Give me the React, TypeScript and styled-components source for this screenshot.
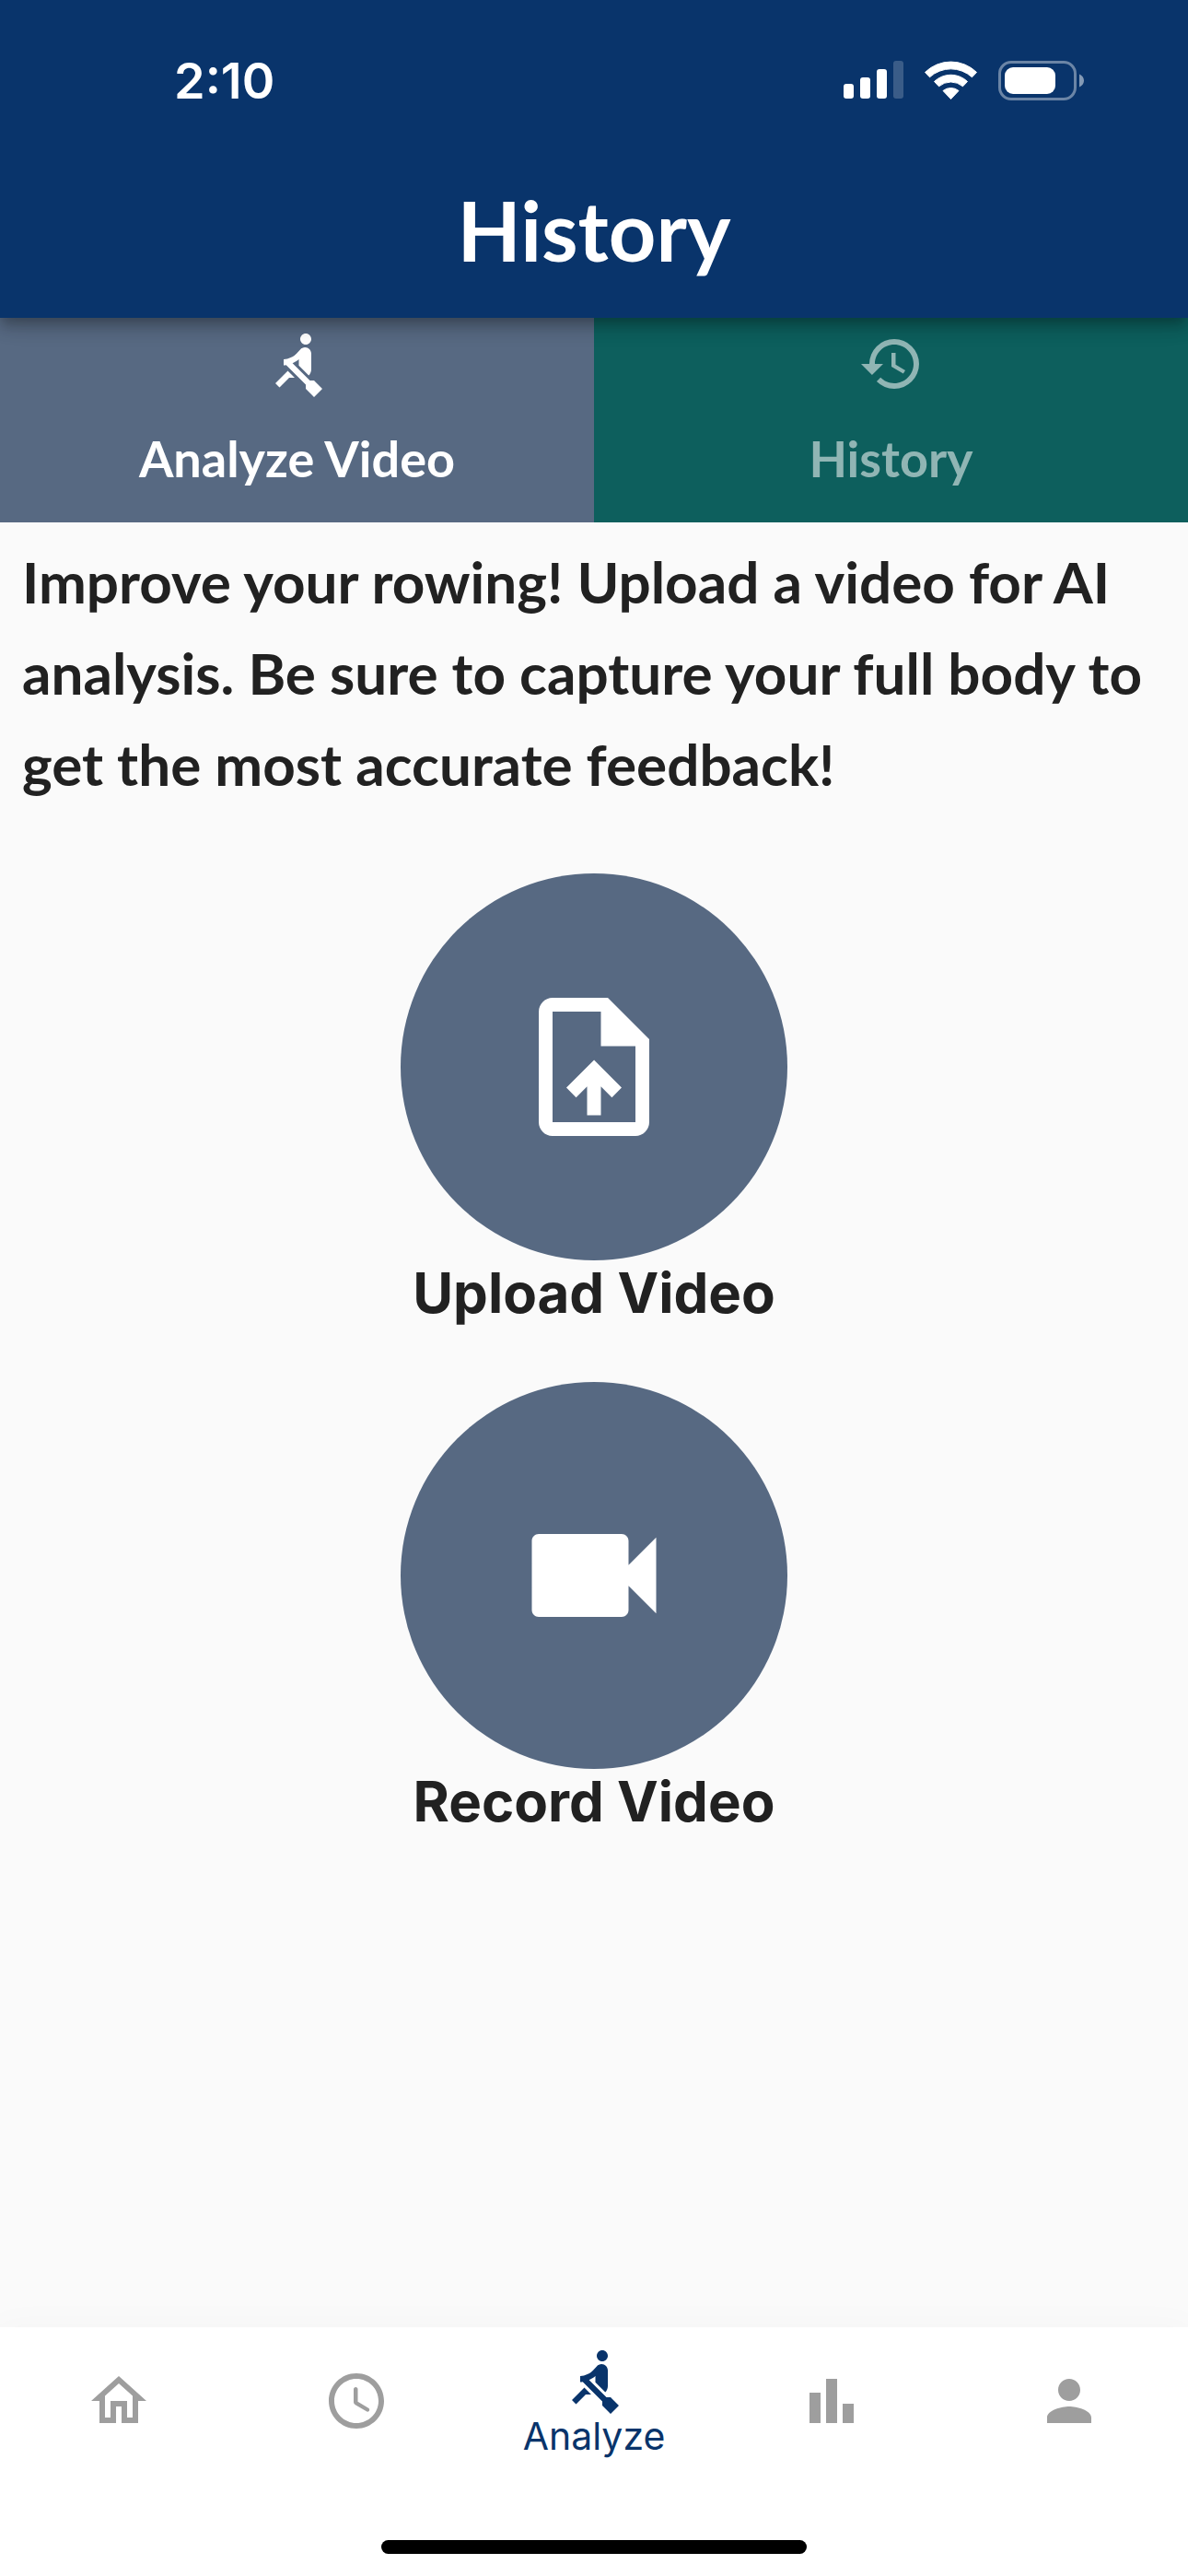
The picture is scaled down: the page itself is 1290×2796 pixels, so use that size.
import React, { useState } from "react";
import styled, { createGlobalStyle } from "styled-components";
import { MdRowing, MdHistory, MdVideocam, MdBarChart, MdPerson } from "react-icons/md";

const GlobalStyle = createGlobalStyle`
  * { box-sizing: border-box; }
  body { margin: 0; background: #fafafa; }
  button { margin: 0; padding: 0; border: 0; background: none; font: inherit; color: inherit; cursor: pointer; }
`;

const display = `"Lato", "Open Sans", sans-serif`;

const Screen = styled.div`
  min-height: 100vh;
  display: flex;
  flex-direction: column;
  background: #fafafa;
  color: #212121;
  font-family: "Inter", "Roboto", sans-serif;
`;

const Header = styled.header`
  position: relative;
  z-index: 1;
  background: #09346b;
  color: #fff;
  box-shadow: 0 6px 12px -3px rgba(0, 0, 0, 0.2), 0 12px 15px 0 rgba(0, 0, 0, 0.14),
    0 3px 30px 0 rgba(0, 0, 0, 0.12);
`;

const StatusBar = styled.div`
  height: 183px;
  padding: 54px 112px 0 189px;
  display: flex;
  justify-content: space-between;
  align-items: flex-start;
`;

const Clock = styled.time`
  font-size: 54px;
  line-height: 68px;
  font-weight: 600;
`;

const StatusIcons = styled.div`
  display: flex;
  align-items: center;
  gap: 23px;
  height: 66px;

  svg { display: block; }
`;

const Title = styled.h1`
  margin: 0;
  padding-bottom: 30px;
  text-align: center;
  font-family: ${display};
  font-size: 90px;
  line-height: 132px;
  font-weight: 700;
`;

const Tabs = styled.div`
  display: grid;
  grid-template-columns: 1fr 1fr;
`;

const Tab = styled.button<{ $tone: string; $active: boolean }>`
  display: flex;
  flex-direction: column;
  align-items: center;
  gap: 28px;
  height: 222px;
  padding-top: 14px;
  background: ${(p) => p.$tone};
  color: ${(p) => (p.$active ? "#fff" : "#90b5b4")};
  font-family: ${display};
  font-size: 54px;
  line-height: 78px;
  font-weight: 700;
`;

const Main = styled.main`
  flex: 1;
  display: flex;
  flex-direction: column;
  gap: 69px;
  padding: 15px 24px 60px;
`;

const Intro = styled.p`
  margin: 0;
  font-family: ${display};
  font-size: 62px;
  line-height: 99px;
  font-weight: 700;
`;

const Actions = styled.div`
  display: flex;
  flex-direction: column;
  align-items: center;
  gap: 62px;
`;

const Action = styled.button`
  display: flex;
  flex-direction: column;
  align-items: center;
  font-size: 60px;
  line-height: 70px;
  font-weight: 700;
`;

const Disc = styled.span`
  display: grid;
  place-items: center;
  width: 420px;
  height: 420px;
  border-radius: 50%;
  background: #576982;
  color: #fff;
`;

const BottomBar = styled.footer`
  height: 270px;
  display: flex;
  flex-direction: column;
  justify-content: space-between;
  align-items: center;
  padding-bottom: 24px;
  background: #fff;
  box-shadow: 0 24px 30px 3px rgba(0, 0, 0, 0.04), 0 9px 42px 6px rgba(0, 0, 0, 0.03);
`;

const Nav = styled.nav`
  width: 100%;
  height: 160px;
  display: grid;
  grid-template-columns: repeat(5, 1fr);
`;

const NavItem = styled.button<{ $active?: boolean }>`
  display: flex;
  flex-direction: column;
  align-items: center;
  justify-content: center;
  gap: 4px;
  color: ${(p) => (p.$active ? "#09346b" : "#9e9e9e")};
  font-size: 41px;
  line-height: 40px;
`;

const HomeIndicator = styled.div`
  width: 462px;
  height: 15px;
  border-radius: 8px;
  background: #000;
`;

const Signal = () => (
  <svg width="65" height="42" viewBox="0 0 65 42" fill="#fff" aria-hidden="true">
    <rect x="0" y="25" width="11" height="16" rx="3" />
    <rect x="18" y="18" width="11" height="23" rx="3" />
    <rect x="36" y="9" width="11" height="32" rx="3" />
    <rect x="54" y="0" width="11" height="41" rx="3" opacity="0.2" />
  </svg>
);

const Wifi = () => (
  <svg width="57" height="42" viewBox="0 0 57 42" fill="#fff" stroke="#fff" strokeWidth="1" strokeLinejoin="round" aria-hidden="true">
    <path d="M.5 12.5A40 40 0 0 1 56.5 12.5L51.5 17.8A34 34 0 0 0 5.5 17.8Z" />
    <path d="M10.5 22.5A26 26 0 0 1 46.5 22.5L41.5 27.8A20 20 0 0 0 15.5 27.8Z" />
    <path d="M20 32.5A13.5 13.5 0 0 1 37 32.5L28.5 41.5Z" />
  </svg>
);

const Battery = () => (
  <svg width="94" height="43" viewBox="0 0 94 43" aria-hidden="true">
    <rect x="1.5" y="1.5" width="82" height="40" rx="12.5" fill="none" stroke="#fff" strokeWidth="3" opacity="0.4" />
    <rect x="7" y="7" width="55" height="29" rx="9" fill="#fff" />
    <path d="M88 14.5C91 15.8 93 18.5 93 21.5S91 27.2 88 28.5Z" fill="#fff" opacity="0.5" />
  </svg>
);

const Icon = ({ size, d }: { size: number; d: string }) => (
  <svg width={size} height={size} viewBox="0 0 24 24" fill="currentColor" aria-hidden="true">
    <path d={d} />
  </svg>
);

const uploadPath =
  "M14 2H6c-1.1 0-1.99.9-1.99 2L4 20c0 1.1.89 2 1.99 2H18c1.1 0 2-.9 2-2V8l-6-6zm4 18H6V4h7v5h5v11zM8 15.01l1.41 1.41L11 14.84V19h2v-4.16l1.59 1.59L16 15.01 12.01 11 8 15.01z";
const homePath =
  "M12 5.69l5 4.5V18h-2v-6H9v6H7v-7.81l5-4.5M12 3L2 12h3v8h6v-6h2v6h6v-8h3L12 3z";
const clockPath =
  "M11.99 2C6.47 2 2 6.48 2 12s4.47 10 9.99 10C17.52 22 22 17.52 22 12S17.52 2 11.99 2zM12 20c-4.42 0-8-3.58-8-8s3.58-8 8-8 8 3.58 8 8-3.58 8-8 8zM11.78 7h-.06c-.4 0-.72.32-.72.72v4.72c0 .35.18.68.49.86l4.15 2.49c.34.2.78.1.98-.24.21-.34.1-.79-.25-.99l-3.87-2.3V7.72c0-.4-.32-.72-.72-.72z";

export default function App() {
  const [tab, setTab] = useState("analyze");

  return (
    <Screen>
      <GlobalStyle />
      <Header>
        <StatusBar>
          <Clock>2:10</Clock>
          <StatusIcons>
            <Signal />
            <Wifi />
            <Battery />
          </StatusIcons>
        </StatusBar>
        <Title>History</Title>
      </Header>
      <Tabs role="tablist">
        <Tab role="tab" aria-selected={tab === "analyze"} $tone="#576982" $active={tab === "analyze"} onClick={() => setTab("analyze")}>
          <MdRowing size={72} />
          Analyze Video
        </Tab>
        <Tab role="tab" aria-selected={tab === "history"} $tone="#0d5f5d" $active={tab === "history"} onClick={() => setTab("history")}>
          <MdHistory size={72} />
          History
        </Tab>
      </Tabs>
      <Main>
        <Intro>
          Improve your rowing! Upload a video for AI analysis. Be sure to capture your full body to get the
          most accurate feedback!
        </Intro>
        <Actions>
          <Action>
            <Disc><Icon size={180} d={uploadPath} /></Disc>
            Upload Video
          </Action>
          <Action>
            <Disc><MdVideocam size={180} /></Disc>
            Record Video
          </Action>
        </Actions>
      </Main>
      <BottomBar>
        <Nav aria-label="Main">
          <NavItem aria-label="Home"><Icon size={72} d={homePath} /></NavItem>
          <NavItem aria-label="Recent"><Icon size={72} d={clockPath} /></NavItem>
          <NavItem $active aria-current="page"><MdRowing size={72} />Analyze</NavItem>
          <NavItem aria-label="Statistics"><MdBarChart size={72} /></NavItem>
          <NavItem aria-label="Profile"><MdPerson size={72} /></NavItem>
        </Nav>
        <HomeIndicator />
      </BottomBar>
    </Screen>
  );
}
